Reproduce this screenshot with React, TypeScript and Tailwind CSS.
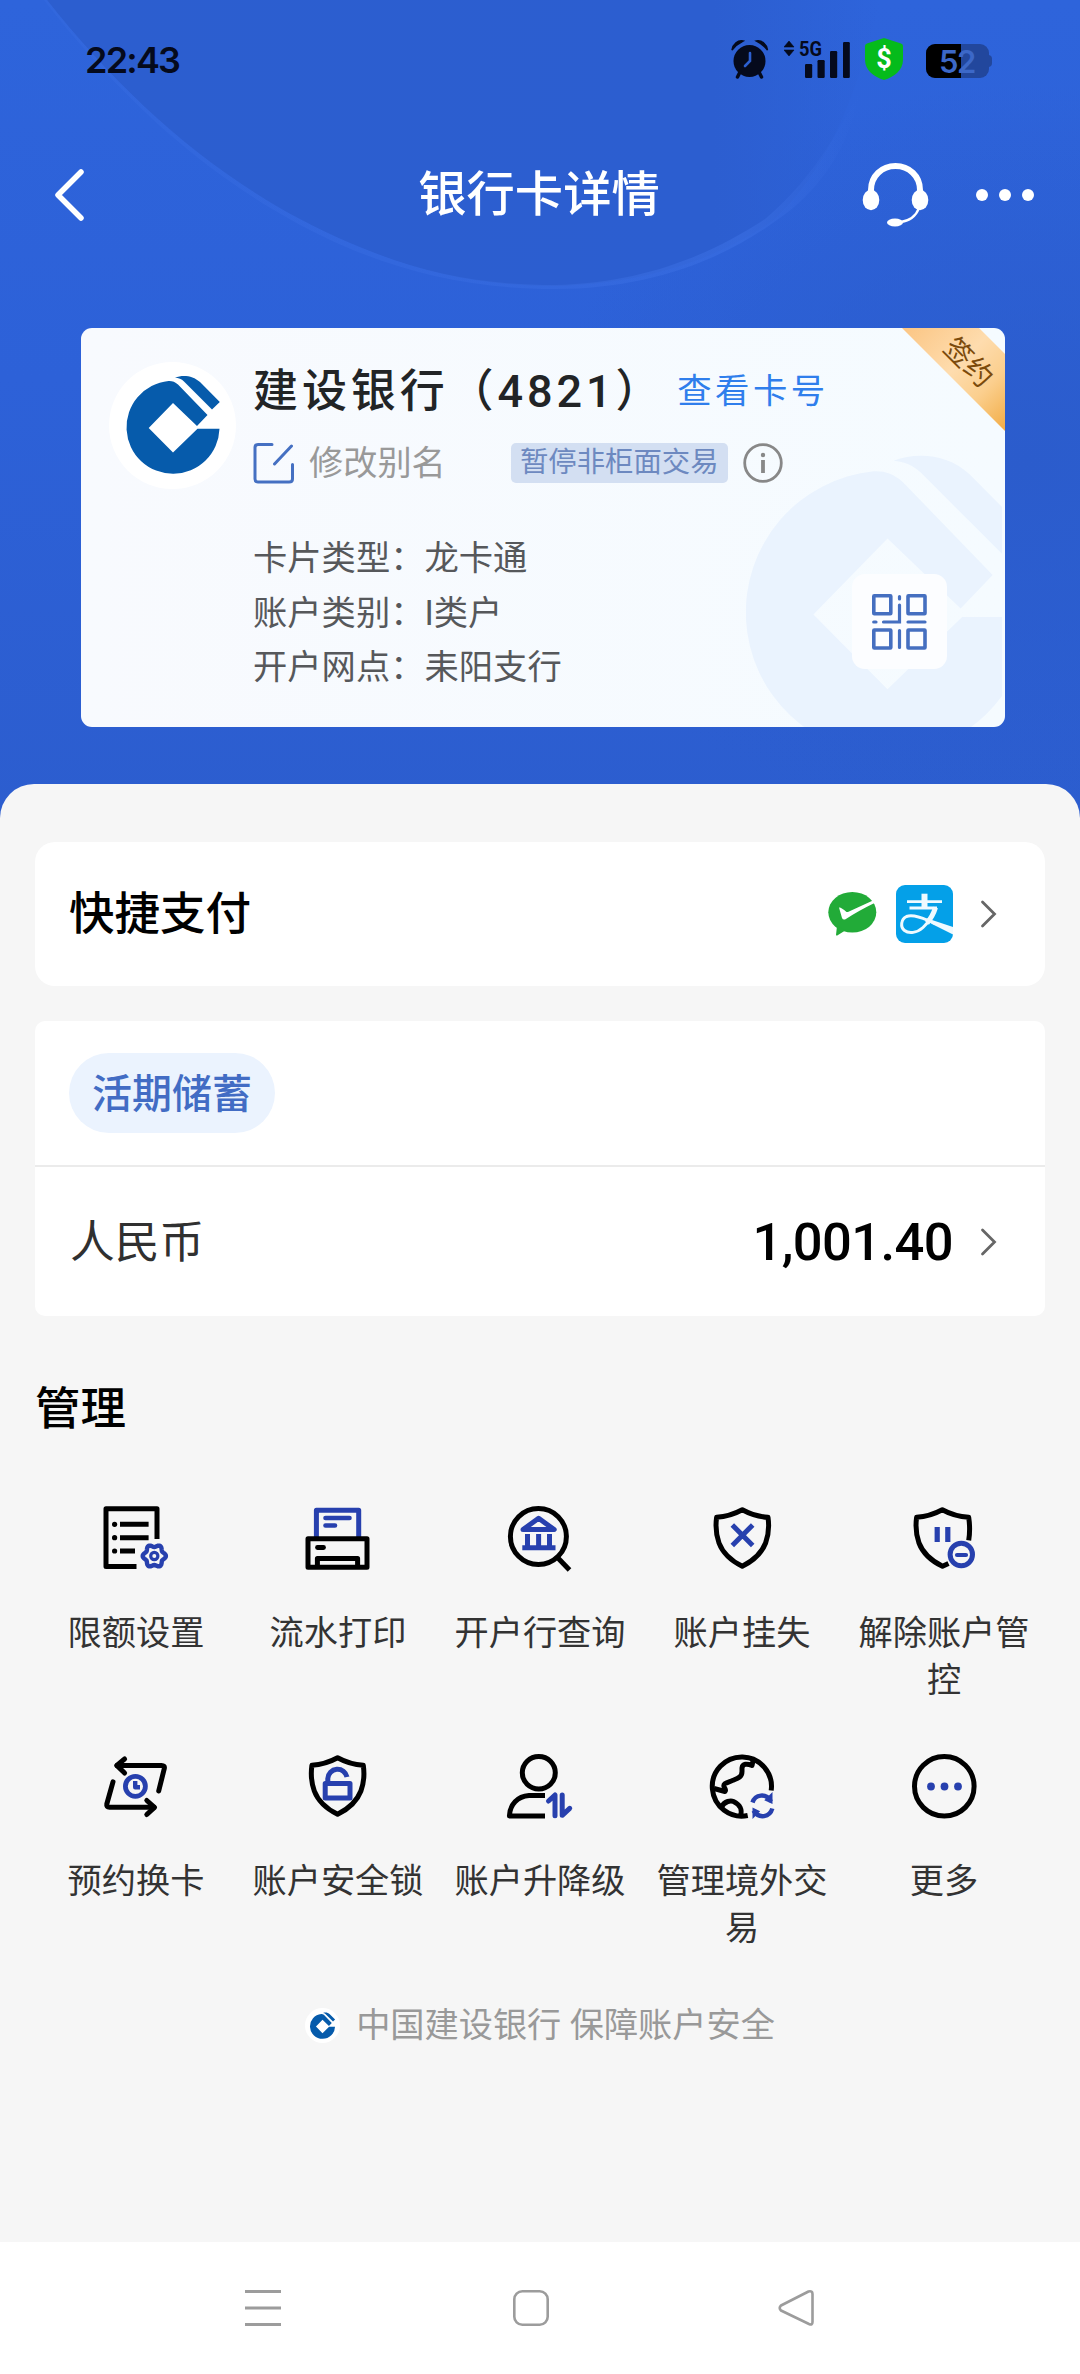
import React from "react";

const INK = "#000000";
const BLUE = "#2740ae";

/* CCB emblem, centred on the origin of a ±50 box */
function Emblem({ className, fill }: { className: string; fill: string }) {
  return (
    <svg viewBox="-50 -54 100 104" className={className} fill={fill}>
      <path d="M-4.5 -47C-1 -47.2 2 -46.2 5 -43.5L34.5 -13L24 -2L0 -25L-24.3 0L0 24.5L24.5 0.8H46.5A46.5 46.5 0 1 1 -4.5 -47Z" />
      <path d="M2 -50.5C10 -53.5 20 -52.5 27 -46L46.8 -26L39 -18.5L11 -46.5C8.5 -49 5.500 -50.2 2 -50.5Z" />
    </svg>
  );
}

function Chevron() {
  return (
    <svg viewBox="0 0 18 30" className="h-[30px] w-[18px]" fill="none" stroke="#666" strokeWidth="2.8">
      <path d="M2.500 3L14.500 15L2.500 27" strokeLinecap="round" />
    </svg>
  );
}

function StatusBar() {
  return (
    <div className="flex h-[118px] items-center justify-between pr-[88px] pl-[85px]">
      <span className="mt-px font-[Inter] text-[36px] leading-none font-semibold tracking-[-1.8px] text-[#050a1c]">22:43</span>
      <div className="flex items-center">
        <svg viewBox="0 0 38 40" className="h-[40px] w-[38px]">
          <circle cx="18.500" cy="22" r="16" fill="#050a1c" />
          <path d="M1 11C2 5 7 1 12 2C8 4 4 7 1 11ZM36.500 11C35.500 5 30.500 1 25.500 2C29.500 4 33.500 7 36.500 11Z" fill="#050a1c" stroke="#050a1c" strokeWidth="1.500" />
          <path d="M9 33L6.500 38M28 33L30.500 38" stroke="#050a1c" strokeWidth="3.500" strokeLinecap="round" />
          <path d="M19 14V22L14 27" stroke="#2c5fd0" strokeWidth="2.600" fill="none" strokeLinecap="round" />
        </svg>
        <svg viewBox="0 -10 68 60" className="ml-[15px] h-[60px] w-[68px]" fill="#050a1c">
          <path d="M5 2L10 8H0ZM5 17L0 11H10Z" stroke="#050a1c" strokeWidth="0.600" />
          <text x="15" y="17" fontFamily="Roboto" fontWeight="700" fontSize="21" textLength="23" lengthAdjust="spacingAndGlyphs">5G</text>
          <rect x="21" y="25" width="7.200" height="14" rx="1.200" />
          <rect x="33.500" y="21" width="7.200" height="18" rx="1.200" />
          <rect x="46" y="12" width="7.200" height="27" rx="1.200" />
          <rect x="59" y="3" width="6.800" height="36" rx="1.200" />
        </svg>
        <svg viewBox="0 0 38 42" className="ml-[13px] h-[42px] w-[38px]">
          <path d="M19 0L36 5.500Q38 6.200 38 8V22C38 32 29 39 19 42C9 39 0 32 0 22V8Q0 6.200 2 5.500Z" fill="#05bb1b" />
          <text x="19" y="30" textAnchor="middle" fontFamily="Roboto" fontWeight="700" fontSize="27" fill="#fff">$</text>
        </svg>
        <div className="relative mt-[3px] ml-[23px] h-[34px] w-[66px]">
          <div className="h-full w-[63px] overflow-hidden rounded-[9px] bg-[#22479d]">
            <div className="h-full w-[35px] bg-black" />
          </div>
          <div className="absolute top-[11px] right-0 h-[12px] w-[4px] rounded-r-[4px] bg-[#22479d]" />
          <span className="absolute inset-y-0 left-[13px] font-[Inter] text-[31px] leading-[35px] font-semibold tracking-[-1.500px] text-[#3c68c8]">52</span>
        </div>
      </div>
    </div>
  );
}

function TitleBar() {
  return (
    <div className="flex h-[154px] items-center justify-between pr-[43px] pl-[52px]">
      <div className="flex w-[170px]">
        <svg viewBox="0 0 36 56" className="h-[56px] w-[36px]" fill="none" stroke="#fff" strokeWidth="5.500" strokeLinecap="round" strokeLinejoin="round">
          <path d="M29 5L6 28L29 51" />
        </svg>
      </div>
      <h1 className="mt-px mr-[6px] text-[48.300px] leading-none font-medium whitespace-nowrap text-white">银行卡详情</h1>
      <div className="flex w-[175px] items-center">
        <svg viewBox="0 0 68 66" className="h-[66px] w-[68px]" fill="#fff">
          <path d="M9 32V28C9 14 20 4 33.500 4S58 14 58 28V32" fill="none" stroke="#fff" strokeWidth="6" />
          <ellipse cx="9" cy="38" rx="8.300" ry="10.200" />
          <ellipse cx="58" cy="38" rx="8.300" ry="10.200" />
          <path d="M57 46C54 54 48 59 38 60" fill="none" stroke="#fff" strokeWidth="2.200" />
          <ellipse cx="33" cy="60.500" rx="8" ry="4" />
        </svg>
        <div className="ml-[46px] flex gap-[11px]">
          <i className="h-3 w-3 rounded-full bg-white" />
          <i className="h-3 w-3 rounded-full bg-white" />
          <i className="h-3 w-3 rounded-full bg-white" />
        </div>
      </div>
    </div>
  );
}

function HeaderBackdrop() {
  return (
    <svg viewBox="0 0 1080 840" className="absolute inset-0 h-[840px] w-[1080px]">
      <defs>
        <linearGradient id="base" x1="0" y1="0" x2="0" y2="1">
          <stop offset="0" stopColor="#2e64db" />
          <stop offset="0.45" stopColor="#2d61d8" />
          <stop offset="1" stopColor="#2c5dce" />
        </linearGradient>
        <radialGradient id="shade" cx="0.950" cy="0.550" r="0.450">
          <stop offset="0" stopColor="#2b5ccc" />
          <stop offset="1" stopColor="#2b5ccc" stopOpacity="0" />
        </radialGradient>
        <linearGradient id="disc" x1="0" y1="0" x2="1" y2="0">
          <stop offset="0" stopColor="#2c5ecf" />
          <stop offset="0.800" stopColor="#2c5ed0" />
          <stop offset="1" stopColor="#2c5ed0" stopOpacity="0" />
        </linearGradient>
        <linearGradient id="rim" x1="0" y1="0" x2="1" y2="0">
          <stop offset="0" stopColor="#3c70e4" stopOpacity="0.250" />
          <stop offset="0.600" stopColor="#3c70e4" stopOpacity="0.400" />
          <stop offset="0.850" stopColor="#3c70e4" stopOpacity="0.550" />
          <stop offset="1" stopColor="#3c70e4" stopOpacity="0" />
        </linearGradient>
      </defs>
      <rect width="1080" height="840" fill="url(#base)" />
      <rect width="1080" height="840" fill="url(#shade)" />
      <path d="M47 0C130 105 230 192 350 243C420 273 480 286 555 286C640 284 715 262 775 219C810 185 850 130 880 0Z" fill="url(#disc)" />
      <path d="M47 0C130 105 230 192 350 243C420 273 480 285 555 285C640 283 705 258 765 219C800 190 830 150 860 90C850 150 815 195 777 220C720 262 645 289 555 289C480 289 415 276 346 247C225 194 127 107 44 0Z" fill="url(#rim)" />
    </svg>
  );
}

function BankCard() {
  const rows = [
    ["卡片类型：", "龙卡通"],
    ["账户类别：", "I类户"],
    ["开户网点：", "耒阳支行"],
  ];
  return (
    <div className="relative mr-[75px] ml-[81px] flex h-[399px] overflow-hidden rounded-[11px] bg-linear-to-r from-[#f8fafe] to-[#f5fbff]">
      <div className="absolute top-[122px] right-[3px] h-[317px] w-[256px] overflow-hidden">
        <Emblem className="absolute top-0 left-[-11px] h-[317px] w-[305px]" fill="#eaf3fe" />
      </div>
      <div className="relative mt-[34px] ml-[28px] flex h-[127px] w-[127px] shrink-0 items-center justify-center rounded-full bg-white">
        <Emblem className="h-[104px] w-[100px]" fill="#065bab" />
      </div>
      <div className="relative ml-[17px] flex flex-col">
        <div className="mt-[31px] flex h-[66px] items-center">
          <span className="text-[45px] font-medium tracking-[3.900px] whitespace-nowrap text-[#222426]">建设银行（4821）</span>
          <span className="ml-[13px] text-[34.400px] tracking-[3.400px] whitespace-nowrap text-[#2f7eec]">查看卡号</span>
        </div>
        <div className="mt-[18px] flex h-[40px] items-center">
          <svg viewBox="0 0 42 42" className="h-[42px] w-[42px]" fill="none" stroke="#4570c2" strokeWidth="3" strokeLinecap="round">
            <path d="M19 2.500H5Q2 2.500 2 5.500V37Q2 40 5 40H36Q39.500 40 39.500 37V22.500M21.500 22L38.500 4" />
          </svg>
          <span className="mt-[2px] ml-[14px] text-[34.200px] font-normal whitespace-nowrap text-[#999]">修改别名</span>
          <span className="ml-[65px] flex h-[40px] w-[217px] items-center justify-center rounded-[5px] bg-[#d3dff2] text-[28.400px] whitespace-nowrap text-[#6d89c0]">暂停非柜面交易</span>
          <svg viewBox="0 0 40 40" className="ml-[15px] h-[40px] w-[40px]" fill="none" stroke="#888" strokeWidth="2.800">
            <circle cx="20" cy="20" r="18.300" />
            <path d="M20 17V30" strokeWidth="3.800" />
            <circle cx="20" cy="12" r="2.200" fill="#888" stroke="none" />
          </svg>
        </div>
        <div className="mt-[48px] flex flex-col text-[34.300px] leading-[54.500px] text-[#56585b]">
          {rows.map(([k, v]) => (
            <div key={k} className="whitespace-nowrap">{k}{v}</div>
          ))}
        </div>
      </div>
      <div className="absolute top-[246px] right-[58px] flex h-[95px] w-[95px] items-center justify-center rounded-[13px] bg-[#fcfdff]">
        <svg viewBox="0 0 56 56" className="h-[56px] w-[56px]" fill="none" stroke="#456fc0" strokeWidth="3.600" strokeLinecap="round">
          <rect x="1.800" y="1.800" width="17" height="18" rx="0.500" />
          <rect x="36" y="1.800" width="17" height="18" rx="0.500" />
          <rect x="1.800" y="36" width="17" height="18" rx="0.500" />
          <rect x="36" y="36" width="17" height="18" rx="0.500" />
          <path d="M27.500 2.500V5M27.500 11V28H11.500M1.700 28H4M36 28H53M27.500 36.500V53.500" strokeWidth="3.200" />
        </svg>
      </div>
      <div className="absolute top-0 right-0 h-[103px] w-[103px]">
        <svg viewBox="0 0 103 103" className="h-full w-full">
          <defs>
            <linearGradient id="ribbon" x1="0" y1="0" x2="1" y2="1">
              <stop offset="0" stopColor="#fbc583" />
              <stop offset="0.450" stopColor="#fedcae" />
              <stop offset="0.700" stopColor="#fbcf8e" />
              <stop offset="1" stopColor="#f2ac45" />
            </linearGradient>
          </defs>
          <path d="M0 0H77L103 26V103Z" fill="url(#ribbon)" />
        </svg>
        <span className="absolute top-[18px] left-[38px] rotate-45 text-[28px] leading-[34px] whitespace-nowrap text-[#7b4a0b]">签约</span>
      </div>
    </div>
  );
}

function WechatPay() {
  return (
    <svg viewBox="0 0 49 44" className="h-[44px] w-[49px]">
      <ellipse cx="24.300" cy="20.300" rx="24" ry="20.300" fill="#22ab38" />
      <path d="M9 34L8 43Q8.500 44 10 43L18 38Z" fill="#22ab38" />
      <path d="M11 15.500Q13 15 18.500 20Q19.500 20.300 21 19.500L45.500 8.300L46.500 11Q30 19 17.500 27.300Q15 28.300 14 26Z" fill="#fff" />
    </svg>
  );
}

function Alipay() {
  return (
    <svg viewBox="0 0 57 58" className="h-[58px] w-[57px]">
      <rect width="57" height="58" rx="9" fill="#04a0e8" />
      <g fill="none" stroke="#effaff">
        <path d="M11 16.600H46M13.500 23H41" strokeWidth="2.800" />
        <path d="M28.500 8.700V23" strokeWidth="6" />
        <path d="M39.500 22.500C37 30 32 38 27 42.500C21 48 13 49 8.500 45.500C4 42 5 34 10.500 31.500C16 29.500 23 31.500 32 35.500L40 39" strokeWidth="3" />
        <path d="M39.500 22.500C37.500 29 34 34.500 31 38" strokeWidth="5" />
      </g>
      <path d="M30 33L57 42V49.500L36 39Z" fill="#effaff" />
    </svg>
  );
}

function Icon({ children }: { children: React.ReactNode }) {
  return (
    <svg viewBox="0 0 72 72" className="h-[72px] w-[72px]" fill="none" stroke={INK} strokeWidth="5" strokeLinejoin="round">
      {children}
    </svg>
  );
}

function gearPath(cx: number, cy: number) {
  const pts: string[] = [];
  for (let i = 0; i < 72; i++) {
    const t = (i * Math.PI) / 36;
    const r = 10.3 + 1.3 * Math.cos(6 * t);
    pts.push(`${(cx + r * Math.cos(t)).toFixed(2)} ${(cy + r * Math.sin(t)).toFixed(2)}`);
  }
  return `M${pts.join("L")}Z`;
}

const SHIELD = "M36.300 7.800Q24 14.500 10.600 15.300Q8.700 29 13 41Q18.500 55.500 36.300 64.300Q54 55.500 59.600 41Q64 29 62 15.300Q48.500 14.500 36.300 7.800Z";

const actions: { label: string; icon: React.ReactNode }[] = [
  {
    label: "限额设置",
    icon: (
      <Icon>
        <path d="M57 37V6.800H6V64.500H36.500" />
        <path d="M20 22.300H48.600M20 35.700H48.600M20 49H35" />
        <g fill={INK} stroke="none">
          <circle cx="14.600" cy="22.300" r="2.600" /><circle cx="14.600" cy="35.700" r="2.600" /><circle cx="14.600" cy="49" r="2.600" />
        </g>
        <g stroke={BLUE}>
          <path d={gearPath(54.3, 54)} strokeWidth="4.400" />
          <circle cx="54.300" cy="54" r="3.600" strokeWidth="3.200" />
        </g>
      </Icon>
    ),
  },
  {
    label: "流水打印",
    icon: (
      <Icon>
        <g stroke={BLUE}>
          <path d="M14.400 36V8.200H56.700V36" />
          <path d="M23.500 16H47.500M23.500 23.500H33" strokeLinecap="round" strokeWidth="4.600" />
        </g>
        <rect x="6" y="36.800" width="59" height="28.400" />
        <path d="M15.400 65V56.400H55.600V65" />
        <path d="M15.500 45.500H21.500" strokeLinecap="round" strokeWidth="4.800" />
      </Icon>
    ),
  },
  {
    label: "开户行查询",
    icon: (
      <Icon>
        <circle cx="34.400" cy="34.500" r="28" />
        <path d="M53.500 55.500L65.500 68" />
        <g stroke={BLUE}>
          <path d="M19 27.600L34.600 16.300L50.200 27.600Z" />
          <path d="M23.500 32V45M34.600 32V45M45.500 32V45" />
          <path d="M18.300 45.700H51.500" />
        </g>
      </Icon>
    ),
  },
  {
    label: "账户挂失",
    icon: (
      <Icon>
        <path d={SHIELD} />
        <path d="M26.300 23L46.700 43.400M46.700 23L26.300 43.400" stroke={BLUE} />
      </Icon>
    ),
  },
  {
    label: "解除账户管控",
    icon: (
      <Icon>
        <path d="M40.500 61.500L34.500 64.300Q16.500 55.500 11 41Q6.700 29 8.600 15.300Q22 14.500 34.300 7.800Q46.500 14.500 60.700 15.300Q62.500 27 60.700 38.300" />
        <g stroke={BLUE}>
          <path d="M29.200 25V40M39.800 25V40" strokeWidth="5.200" />
          <circle cx="53.300" cy="52.500" r="11.200" />
          <path d="M49 53H58" strokeLinecap="round" strokeWidth="4.200" />
        </g>
      </Icon>
    ),
  },
  {
    label: "预约换卡",
    icon: (
      <Icon>
        <g strokeLinecap="round">
          <path d="M17 15.400H61.500Q65 15.400 64.300 18.500L58.700 41" />
          <path d="M24.600 9L16.800 15.400L24.600 23" />
          <path d="M13 31.800L6.800 54Q6.200 57.300 9.500 57.300H54" />
          <path d="M46.800 50.500L54.500 57.300L46.800 64.500" />
        </g>
        <g stroke={BLUE}>
          <circle cx="35.400" cy="36.300" r="10" strokeWidth="4.800" />
          <path d="M35.200 31V37.300H40" strokeWidth="4.400" />
        </g>
      </Icon>
    ),
  },
  {
    label: "账户安全锁",
    icon: (
      <Icon>
        <path d={SHIELD} transform="translate(-0.700 0)" />
        <g stroke={BLUE}>
          <rect x="23.200" y="33.400" width="24.800" height="14.600" />
          <path d="M25.800 33V28.500A9.700 9.700 0 0 1 45 27" />
        </g>
      </Icon>
    ),
  },
  {
    label: "账户升降级",
    icon: (
      <Icon>
        <ellipse cx="34.800" cy="22.700" rx="16.500" ry="16.300" />
        <path d="M41 45.600H25C13.500 46.500 5.800 54.500 5.400 66H41" />
        <g stroke={BLUE} strokeLinecap="round">
          <path d="M44.500 51L51 45V65.700" />
          <path d="M58.200 45V65.300L65.700 58.300" />
        </g>
      </Icon>
    ),
  },
  {
    label: "管理境外交易",
    icon: (
      <Icon>
        <path d="M65.200 40.500A29.600 29.600 0 1 0 41.700 65.500" />
        <path d="M47.500 8.500L46 15.500C41 13.500 36.500 13.500 36 18V21.500C36 27 32 28.300 27 30.300C21 32.800 17 33 18 36.500C18.700 38.500 20.500 40 19 41.500L8 38.500" />
        <path d="M15 57.500C19 50.500 25 50.500 27.500 51.500C34 54.500 36.500 60 34.500 66" />
        <g stroke={BLUE} strokeWidth="4.400" strokeLinejoin="miter">
          <path d="M46.500 52.500C49 44.500 60 42.500 65 51.500" />
          <path d="M66.300 58.500C64 67 53 69.500 47.500 60.500" />
          <path d="M65.500 44.500V52.500L60 50ZM47.500 66.500V59L52.500 61.500Z" strokeWidth="2" fill={BLUE} />
        </g>
      </Icon>
    ),
  },
  {
    label: "更多",
    icon: (
      <Icon>
        <circle cx="36.300" cy="36.300" r="29.800" />
        <g fill={BLUE} stroke="none">
          <circle cx="23" cy="36.500" r="3.900" /><circle cx="36.500" cy="36.500" r="3.900" /><circle cx="50" cy="36.500" r="3.900" />
        </g>
      </Icon>
    ),
  },
];

export default function App() {
  return (
    <div className="flex h-[2374px] w-[1080px] flex-col overflow-hidden bg-[#f6f6f6] font-[Roboto,'Noto_Sans_CJK_SC',sans-serif]">
      <header className="relative h-[784px] shrink-0">
        <HeaderBackdrop />
        <div className="relative pb-[57px]">
          <StatusBar />
          <TitleBar />
          <div className="h-[56px]" />
          <BankCard />
        </div>
      </header>

      <main className="relative flex grow flex-col rounded-t-[34px] bg-[#f6f6f6] px-[35px] pt-[58px]">
        <section className="flex h-[144px] items-center justify-between rounded-[20px] bg-white pr-[47px] pl-[34px]">
          <h2 className="mt-[2px] text-[45.500px] leading-none font-medium text-black">快捷支付</h2>
          <div className="flex items-center">
            <WechatPay />
            <span className="ml-[19px]"><Alipay /></span>
            <span className="ml-[27px]"><Chevron /></span>
          </div>
        </section>

        <section className="mt-[35px] flex h-[295px] flex-col rounded-[10px] bg-white">
          <div className="flex h-[146px] items-center border-b-2 border-[#ebebeb] pl-[34px]">
            <span className="mb-px flex h-[80px] w-[206px] items-center justify-center rounded-full bg-[#ebf3fe] pt-[4px] text-[40px] font-medium text-[#426cc4]">活期储蓄</span>
          </div>
          <div className="flex grow items-center justify-between pr-[47px] pl-[35px]">
            <span className="mt-[2px] text-[44.800px] font-normal text-[#303030]">人民币</span>
            <div className="flex items-center">
              <span className="mt-px text-[52.500px] leading-none font-medium tracking-[-0.600px] text-black">1,001.40</span>
              <span className="ml-[27px]"><Chevron /></span>
            </div>
          </div>
        </section>

        <h2 className="mt-[64px] text-[45.500px] leading-[60px] font-medium text-black">管理</h2>

        <section className="mt-[62px] grid grid-cols-5">
          {actions.map((a) => (
            <div key={a.label} className="flex h-[248px] flex-col items-center">
              {a.icon}
              <span className="mt-[36px] w-[173px] text-center text-[34.200px] leading-[47px] break-all text-[#333]">{a.label}</span>
            </div>
          ))}
        </section>

        <footer className="mt-[2px] flex items-center justify-center gap-[16px]">
          <span className="mt-px flex h-[35px] w-[35px] items-center justify-center rounded-full bg-white">
            <Emblem className="h-[28px] w-[27px]" fill="#065bab" />
          </span>
          <span className="text-[34.200px] leading-[50px] text-[#999]">中国建设银行 保障账户安全</span>
        </footer>
      </main>

      <nav className="flex h-[132px] shrink-0 justify-between bg-white pt-[47px] pr-[264px] pl-[244px]">
        <svg viewBox="0 0 38 38" className="h-[38px] w-[38px]" stroke="#9c9c9c" strokeWidth="3">
          <path d="M1 2.500H37M1 19H37M1 35.500H37" />
        </svg>
        <svg viewBox="0 0 38 38" className="ml-[2px] h-[38px] w-[38px]" fill="none" stroke="#9c9c9c" strokeWidth="2.600">
          <rect x="2.300" y="2.300" width="33.400" height="33.400" rx="8" />
        </svg>
        <svg viewBox="0 0 38 38" className="h-[38px] w-[38px]" fill="none" stroke="#9c9c9c" strokeWidth="2.600" strokeLinejoin="round">
          <path d="M3 16.500L30.500 2.500Q34.500 1.500 34.500 5V33Q34.500 36.500 31 35L3 21.500Q0.500 19 3 16.500Z" />
        </svg>
      </nav>
    </div>
  );
}
